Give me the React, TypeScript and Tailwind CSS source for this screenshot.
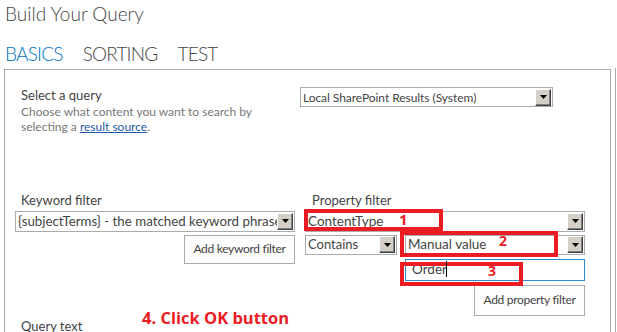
import React from "react";

const font = { fontFamily: 'Lato, "Open Sans", sans-serif' };
const annot = { fontFamily: '"Open Sans", "Noto Sans", sans-serif' };

function DropBtn() {
  return (
    <span className="mr-[1px] flex h-[17px] w-[16px] shrink-0 items-center justify-center border border-t-white border-l-white border-r-[#404040] border-b-[#404040] bg-[#d4d0c8] shadow-[inset_-1px_-1px_0_#808080]">
      <svg width="7" height="4" viewBox="0 0 7 4">
        <path d="M0 0H7L3.5 4Z" fill="#000" />
      </svg>
    </span>
  );
}

function Select({ text, className = "", size = "text-[13px]" }: { text: string; className?: string; size?: string }) {
  return (
    <div className={`flex items-center border border-[#ababab] bg-white ${className}`}>
      <span className={`min-w-0 flex-1 overflow-hidden whitespace-nowrap pl-[2px] leading-[17px] text-[#444] ${size}`}>{text}</span>
      <DropBtn />
    </div>
  );
}

function Btn({ text, className = "" }: { text: string; className?: string }) {
  return (
    <div className={`flex items-center justify-center whitespace-nowrap border border-[#ababab] bg-[#fdfdfd] text-[12px] tracking-[-0.3px] text-[#444] ${className}`}>
      {text}
    </div>
  );
}

export default function App() {
  return (
    <div className="relative h-[332px] w-[617px] overflow-hidden bg-white" style={font}>
      <div className="pl-[5px] pt-[3px] text-[19px] font-light leading-[22px] text-[#444]">Build Your Query</div>
      <div className="mt-[18px] flex gap-[20px] pl-[5px] text-[19px] font-light leading-[22px] tracking-[-0.8px] text-[#444]">
        <span className="text-[#0072c6]">BASICS</span>
        <span>SORTING</span>
        <span>TEST</span>
      </div>
      <div className="mt-[4px] ml-[4px] h-[300px] w-[607px] border border-[#ababab] pl-[10px]">
        <div className="grid grid-cols-[280px_280px] gap-x-[10px] pt-[17px]">
          <div className="pl-[6px] pt-[1px] leading-[15.5px]">
            <div className="text-[13px] text-[#444]">Select a query</div>
            <div className="text-[12px] text-[#777]">Choose what content you want to search by</div>
            <div className="text-[12px] text-[#777]">
              selecting a <span className="text-[#1f5aa6] underline">result source</span>.
            </div>
          </div>
          <div>
            <Select
              text="Local SharePoint Results (System)"
              className="-ml-[5px] h-[20px] w-[253px]"
              size="text-[12px] tracking-[-0.05px]"
            />
          </div>
        </div>
        <div className="mt-[58px] grid grid-cols-[280px_280px] gap-x-[10px]">
          <div className="flex flex-col">
            <div className="pl-[6px] text-[13px] leading-[15px] text-[#444]">Keyword filter</div>
            <Select text="{subjectTerms} - the matched keyword phrase" className="mt-[3px] h-[21px]" size="text-[13.3px]" />
            <Btn text="Add keyword filter" className="mt-[3px] h-[29px] w-[111px] self-end" />
          </div>
          <div className="flex flex-col">
            <div className="pl-[7px] text-[13px] leading-[15px] text-[#444]">Property filter</div>
            <Select text="ContentType" className="mt-[3px] h-[21px]" size="text-[13.5px]" />
            <div className="mt-[3px] flex gap-[8px]">
              <Select text="Contains" className="h-[20px] w-[92px]" size="text-[13px]" />
              <Select text="Manual value" className="h-[20px] w-[180px]" size="text-[13.5px]" />
            </div>
            <div className="mt-[4px] ml-[100px] flex h-[22px] w-[180px] items-center border border-[#2b8bd6] bg-white pl-[6px] text-[13.5px] text-[#444]">
              Order
            </div>
            <Btn text="Add property filter" className="mt-[4px] h-[31px] w-[111px] self-end" />
          </div>
        </div>
        <div className="mt-[3px] pl-[6px] text-[13px] leading-[15px] text-[#444]">Query text</div>
      </div>
      <div className="absolute top-[68px] left-[615px] h-[264px] w-[1px] bg-[#ababab]" />

      {/* annotations */}
      <div className="absolute left-[304px] top-[209px] h-[22px] w-[139px] border-[4px] border-[#ed1c24]" />
      <div className="absolute left-[400px] top-[231px] h-[26px] w-[158px] border-[4px] border-[#ed1c24]" />
      <div className="absolute left-[400px] top-[262px] h-[24px] w-[123px] border-[4px] border-[#ed1c24]" />
      <div className="absolute left-[446px] top-[261px] h-[16px] w-[1px] bg-black" />
      <span className="absolute left-[399px] top-[209px] text-[15px] font-bold leading-[20px] text-[#ed1c24]" style={annot}>1</span>
      <span className="absolute left-[499px] top-[232px] text-[14px] font-bold leading-[18px] text-[#ed1c24]" style={annot}>2</span>
      <span className="absolute left-[488px] top-[262px] text-[14px] font-bold leading-[18px] text-[#ed1c24]" style={annot}>3</span>
      <span className="absolute left-[142px] top-[308px] text-[16.5px] font-bold leading-[20px] text-[#ed1c24]" style={annot}>4. Click OK button</span>
    </div>
  );
}
